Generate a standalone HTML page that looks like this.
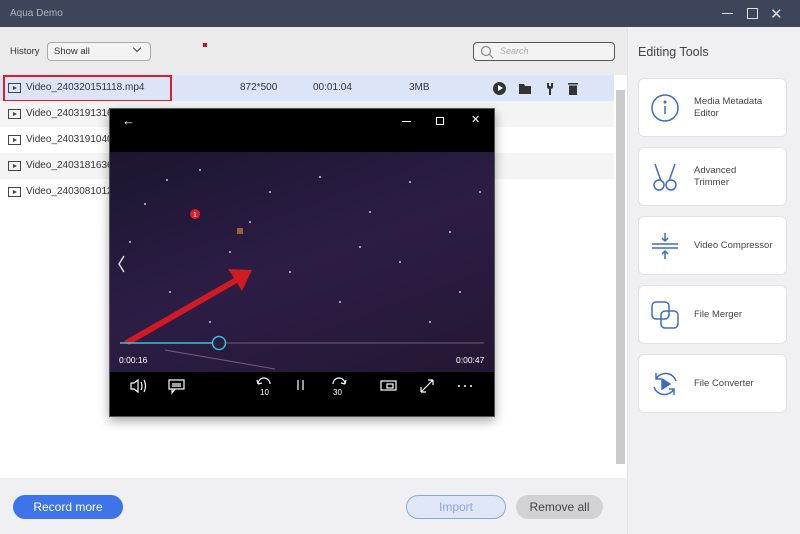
<!DOCTYPE html>
<html><head><meta charset="utf-8"><style>
*{margin:0;padding:0;box-sizing:border-box}
body{width:800px;height:534px;overflow:hidden;font-family:"Liberation Sans",sans-serif;font-size:10px;color:#333;position:relative;background:#fff}
.a{position:absolute}
.card{position:absolute;left:638px;width:149px;height:59px;background:#fff;border:1px solid #e2e2e6;border-radius:6px}
.card span{position:absolute;left:55px;font-size:9.5px;color:#444;line-height:12px}
.card svg{position:absolute;left:11px;top:14px}
.row{position:absolute;left:0;width:614px;height:26px}
.row .n{position:absolute;left:26px;top:7px;font-size:10px;color:#333}
.fi{position:absolute;left:8px;top:8px;width:13px;height:10px;border:1.5px solid #444}
.fi:after{content:"";position:absolute;left:4px;top:1.5px;border-left:4px solid #444;border-top:2.5px solid transparent;border-bottom:2.5px solid transparent}
.w{color:#fff}
</style></head><body>
<div class="a" style="left:0;top:0;width:800px;height:27px;background:#3c4559"></div>
<div class="a" style="left:10px;top:8px;color:#aeb4c2;font-size:10px">Aqua Demo</div>
<div class="a" style="left:722px;top:13px;width:11px;height:1px;background:#ddd"></div>
<div class="a" style="left:747px;top:8px;width:11px;height:11px;border:1.3px solid #ddd"></div>
<div class="a" style="left:770px;top:5px;color:#ddd;font-size:15px">✕</div>
<div class="a" style="left:0;top:27px;width:627px;height:48px;background:#ebebeb"></div>
<div class="a" style="left:627px;top:27px;width:173px;height:507px;background:#f0f0f2;border-left:1px solid #e4e4e4"></div>
<div class="a" style="left:10px;top:46px;font-size:9.5px">History</div>
<div class="a" style="left:47px;top:42px;width:104px;height:19px;border:1px solid #aaa;border-radius:4px;background:#f3f3f3"></div>
<div class="a" style="left:54px;top:46px;font-size:9.5px">Show all</div>
<div class="a" style="left:134px;top:45px;width:6px;height:6px;border-right:1.5px solid #444;border-bottom:1.5px solid #444;transform:rotate(45deg)"></div>
<div class="a" style="left:203px;top:43px;width:4px;height:4px;background:#d01020"></div>
<div class="a" style="left:473px;top:42px;width:142px;height:19px;border:1px solid #555;border-radius:4px;background:#f3f3f3"></div>
<svg class="a" style="left:480px;top:45px" width="14" height="14" fill="none" stroke="#888" stroke-width="1.2"><circle cx="6" cy="6" r="4.5"/><path d="M9.5 9.5L13 13"/></svg>
<div class="a" style="left:500px;top:46px;font-size:9px;font-style:italic;color:#aaa">Search</div>
<div class="a" style="left:638px;top:45px;font-size:12.5px;color:#444">Editing Tools</div>
<div class="row" style="top:75px;background:#dce5f8"><div class="fi"></div><div class="n">Video_240320151118.mp4</div>
<div class="a" style="left:240px;top:7px">872*500</div><div class="a" style="left:313px;top:7px">00:01:04</div><div class="a" style="left:409px;top:7px">3MB</div>
<div class="a" style="left:493px;top:7px;width:13px;height:13px;border-radius:50%;background:#333"></div><div class="a" style="left:498px;top:10px;border-left:5px solid #fff;border-top:3.5px solid transparent;border-bottom:3.5px solid transparent"></div>
<svg class="a" style="left:518px;top:7px" width="66" height="14" fill="#333"><path d="M1 2H6L7 4H13V12H1Z"/><path d="M29 1V5Q29 7 32 7Q35 7 35 5V1L33 1V4H31V1ZM31 7H33V13H31Z"/><rect x="50" y="1" width="10" height="1.5"/><path d="M51 3.5H59V13H51Z"/></svg>
</div>
<div class="a" style="left:3px;top:75px;width:169px;height:27px;border:2px solid #d8202c"></div>
<div class="row" style="top:101px;background:#f4f4f4"><div class="fi"></div><div class="n">Video_2403191316</div></div>
<div class="row" style="top:127px"><div class="fi"></div><div class="n">Video_2403191040</div></div>
<div class="row" style="top:153px;background:#f4f4f4"><div class="fi"></div><div class="n">Video_2403181636</div></div>
<div class="row" style="top:179px"><div class="fi"></div><div class="n">Video_2403081012</div></div>
<div class="a" style="left:616px;top:90px;width:9px;height:374px;background:#cbcbcb"></div>
<div class="a" style="left:0;top:478px;width:627px;height:56px;background:#f0f0f2"></div>
<div class="a" style="left:13px;top:495px;width:110px;height:24px;border-radius:12px;background:#3d74ea;color:#fff;font-size:12px;text-align:center;line-height:24px">Record more</div>
<div class="a" style="left:406px;top:495px;width:100px;height:24px;border-radius:12px;background:#dfe6f6;border:1px solid #8aa6e4;color:#8aa6e4;font-size:12px;text-align:center;line-height:22px">Import</div>
<div class="a" style="left:516px;top:495px;width:87px;height:24px;border-radius:12px;background:#d2d2d4;color:#444;font-size:12px;text-align:center;line-height:24px">Remove all</div>

<div class="card" style="top:78px"><svg width="30" height="30" viewBox="0 0 30 30" fill="none" stroke="#3b6bd0" stroke-width="1.5"><circle cx="15" cy="15" r="13"/><line x1="15" y1="13" x2="15" y2="21"/><circle cx="15" cy="9" r="0.8" fill="#3b6bd0"/></svg><span style="top:17px">Media Metadata<br>Editor</span></div>
<div class="card" style="top:147px"><svg width="30" height="30" viewBox="0 0 30 30" fill="none" stroke="#3b6bd0" stroke-width="1.5"><circle cx="9" cy="23" r="5"/><circle cx="21" cy="23" r="5"/><path d="M11 19L5 2M19 19L25 2"/></svg><span style="top:17px">Advanced<br>Trimmer</span></div>
<div class="card" style="top:216px"><svg width="30" height="30" viewBox="0 0 30 30" fill="none" stroke="#3b6bd0" stroke-width="1.5"><path d="M2 13H28M2 17H28M15 2V10M12 7L15 10L18 7M15 28V20M12 23L15 20L18 23"/></svg><span style="top:23px">Video Compressor</span></div>
<div class="card" style="top:285px"><svg width="30" height="30" viewBox="0 0 30 30" fill="none" stroke="#3b6bd0" stroke-width="1.5"><rect x="2" y="2" width="17" height="17" rx="4"/><rect x="11" y="11" width="17" height="17" rx="4"/></svg><span style="top:23px">File Merger</span></div>
<div class="card" style="top:354px"><svg width="30" height="30" viewBox="0 0 30 30" fill="none" stroke="#3b6bd0" stroke-width="1.5"><path d="M6 10A11 11 0 0 1 26 12M24 20A11 11 0 0 1 4 18M6 4V10H11M24 26V20H19"/><path d="M12 10L20 15L12 20Z" fill="#3b6bd0"/></svg><span style="top:23px">File Converter</span></div>

<div class="a" style="left:109px;top:108px;width:386px;height:309px;background:#000;border:1px solid #555;box-shadow:0 4px 10px rgba(0,0,0,.35)"></div>
<div class="a w" style="left:122px;top:113px;font-size:13px">←</div>
<div class="a" style="left:402px;top:121px;width:9px;height:1px;background:#fff"></div>
<div class="a" style="left:436px;top:117px;width:8px;height:8px;border:1px solid #fff"></div>
<div class="a w" style="left:471px;top:113px;font-size:11px">✕</div>
<div class="a" style="left:110px;top:152px;width:384px;height:220px;background:linear-gradient(160deg,#1c1530 0%,#2c1d45 50%,#241733 100%)"></div>
<svg class="a" style="left:110px;top:152px" width="384" height="220">
<g fill="#cfc8e6"><circle cx="57" cy="28" r="1"/><circle cx="35" cy="52" r="1"/><circle cx="90" cy="18" r="1"/><circle cx="160" cy="40" r="1"/><circle cx="210" cy="25" r="1"/><circle cx="260" cy="60" r="1"/><circle cx="300" cy="30" r="1"/><circle cx="340" cy="80" r="1"/><circle cx="120" cy="100" r="1"/><circle cx="180" cy="120" r="1"/><circle cx="230" cy="150" r="1"/><circle cx="290" cy="110" r="1"/><circle cx="350" cy="140" r="1"/><circle cx="60" cy="140" r="1"/><circle cx="100" cy="170" r="1"/><circle cx="320" cy="170" r="1"/><circle cx="20" cy="90" r="1"/><circle cx="370" cy="40" r="1"/><circle cx="140" cy="70" r="1"/><circle cx="250" cy="95" r="1"/></g>
<circle cx="85" cy="62" r="5" fill="#e01c24"/><text x="83" y="65" font-size="7" fill="#fff" font-family="Liberation Sans">1</text>
<rect x="127" y="76" width="6" height="6" fill="#a0603a"/>
<path d="M14 104L9 112L14 120" stroke="#ddd" stroke-width="1.5" fill="none"/>
<path d="M14 189L124 126L118 117L142 118L132 139L127 131L19 193Z" fill="#d01a24"/>
<line x1="55" y1="198" x2="165" y2="217" stroke="#7a5a80" stroke-width="1"/>
<line x1="10" y1="191" x2="108" y2="191" stroke="#35c0e0" stroke-width="1.5"/>
<line x1="116" y1="191" x2="374" y2="191" stroke="#6a5f78" stroke-width="1"/>
<circle cx="109" cy="191" r="6.5" fill="#2a1d40" stroke="#35c0e0" stroke-width="1.5"/>
<text x="9" y="211" font-size="8.5" fill="#fff" font-family="Liberation Sans">0:00:16</text>
<text x="346" y="211" font-size="8.5" fill="#fff" font-family="Liberation Sans">0:00:47</text>
</svg>
<svg class="a" style="left:110px;top:372px" width="384" height="44" fill="none" stroke="#fff" stroke-width="1.2" font-family="Liberation Sans">
<path d="M21 11H24L28 8V20L24 17H21Z M31 10Q33 14 31 18 M34 8Q37 14 34 20"/>
<rect x="59" y="8" width="15" height="9"/><path d="M62 17V21L65 17 M62 12H71M62 14H71"/>
<path d="M148 12A6 6 0 1 1 160 12 M148 12L147 8M148 12L152 11"/><text x="150" y="23" font-size="8" fill="#fff" stroke="none">10</text>
<path d="M188 8V18M193 8V18"/>
<path d="M235 12A6 6 0 1 0 223 12 M235 12L236 8M235 12L231 11"/><text x="223" y="23" font-size="8" fill="#fff" stroke="none">30</text>
<rect x="271" y="9" width="15" height="9"/><rect x="277" y="12" width="6" height="4"/>
<path d="M311 20L323 8M311 20V15M311 20H316M323 8H318M323 8V13"/>
<g fill="#fff" stroke="none"><circle cx="349" cy="14" r="1"/><circle cx="355" cy="14" r="1"/><circle cx="361" cy="14" r="1"/></g>
</svg>
</body></html>
